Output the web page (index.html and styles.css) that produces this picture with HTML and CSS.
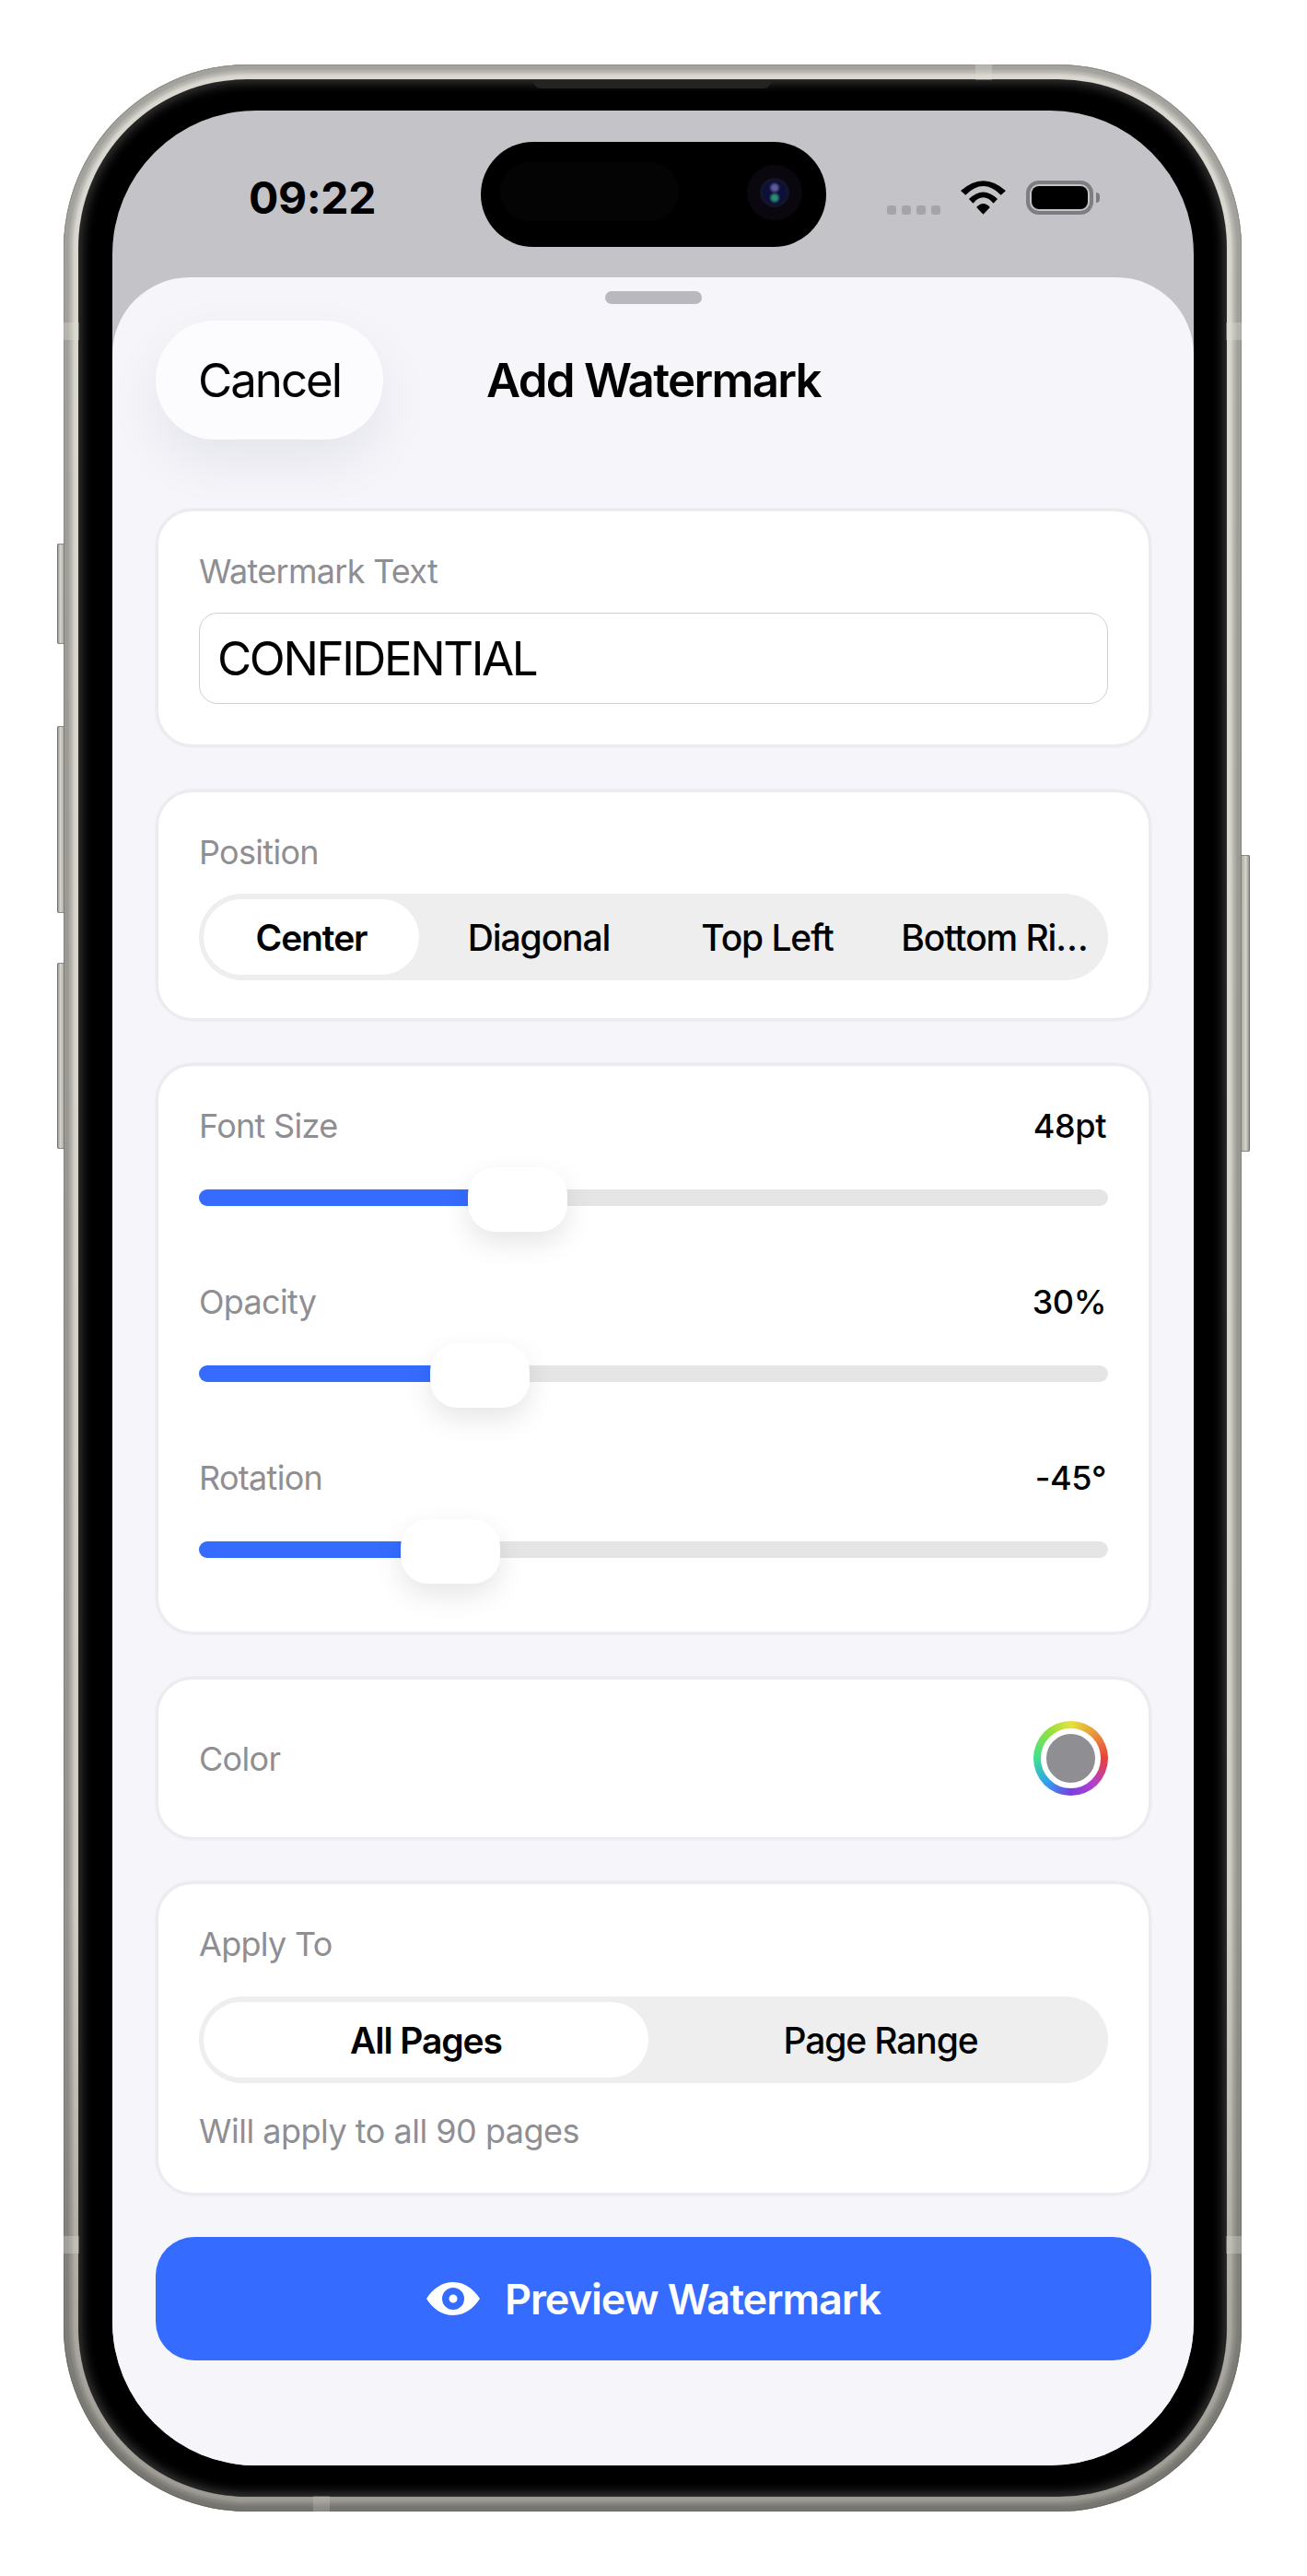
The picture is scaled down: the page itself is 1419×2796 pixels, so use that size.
FILE: index.html
```html
<!DOCTYPE html>
<html lang="en">
<head>
<meta charset="utf-8">
<title>Add Watermark</title>
<link rel="stylesheet" href="styles.css">
</head>
<body>
<div class="phone">
  <span class="side-btn side-btn--mute"></span>
  <span class="side-btn side-btn--up"></span>
  <span class="side-btn side-btn--down"></span>
  <span class="side-btn side-btn--power"></span>
  <span class="band band--top"></span>
  <span class="band band--bottom"></span>
  <span class="band band--l1"></span>
  <span class="band band--r1"></span>
  <span class="band band--l2"></span>
  <span class="band band--r2"></span>
  <div class="bezel">
    <span class="speaker"></span>
    <div class="screen">
      <div class="island">
        <span class="island-pill"></span>
        <span class="lens"><span class="lens-core"></span></span>
      </div>
      <header class="status">
        <span class="time">09:22</span>
        <div class="status-icons">
          <div class="signal"><i></i><i></i><i></i><i></i></div>
          <svg class="wifi" viewBox="0 0 49.4 37" aria-hidden="true">
            <path d="M0 11Q24.7-11 49.4 11L44.1 15.7Q24.7-3.7 5.3 15.7Z"/>
            <path d="M9 20Q24.7 4.7 40.4 20L35.8 24.7Q24.7 12 13.6 24.7Z"/>
            <path d="M17.3 29Q24.7 21 32.1 29L24.7 37Z"/>
          </svg>
          <div class="battery"><span class="battery-fill"></span></div>
          <span class="battery-cap"></span>
        </div>
      </header>
      <main class="sheet">
        <div class="grabber"></div>
        <div class="nav">
          <button class="cancel">Cancel</button>
          <h1 class="title">Add Watermark</h1>
        </div>

        <section class="card card--text">
          <div class="label">Watermark Text</div>
          <div class="input">CONFIDENTIAL</div>
        </section>

        <section class="card card--position">
          <div class="label">Position</div>
          <div class="segment segment--four">
            <div class="tab tab--on">Center</div>
            <div class="tab">Diagonal</div>
            <div class="tab">Top Left</div>
            <div class="tab tab--trim">Bottom Ri…</div>
          </div>
        </section>

        <section class="card card--sliders">
          <div class="slider-row">
            <div class="label-row"><span class="label">Font Size</span><span class="value">48pt</span></div>
            <div class="slider">
              <div class="track"><div class="fill" style="width:310px"></div></div>
              <div class="thumb" style="left:292px"></div>
            </div>
          </div>
          <div class="slider-row">
            <div class="label-row"><span class="label">Opacity</span><span class="value">30%</span></div>
            <div class="slider">
              <div class="track"><div class="fill" style="width:270px"></div></div>
              <div class="thumb" style="left:251px"></div>
            </div>
          </div>
          <div class="slider-row">
            <div class="label-row"><span class="label">Rotation</span><span class="value">-45°</span></div>
            <div class="slider">
              <div class="track"><div class="fill" style="width:240px"></div></div>
              <div class="thumb" style="left:219px"></div>
            </div>
          </div>
        </section>

        <section class="card card--color">
          <span class="label">Color</span>
          <div class="swatch"><span class="swatch-dot"></span></div>
        </section>

        <section class="card card--apply">
          <div class="label">Apply To</div>
          <div class="segment segment--two">
            <div class="tab tab--on">All Pages</div>
            <div class="tab tab--trim">Page Range</div>
          </div>
          <div class="hint">Will apply to all 90 pages</div>
        </section>

        <button class="preview">
          <svg class="eye" viewBox="0 0 58 36" aria-hidden="true">
            <path fill-rule="evenodd" d="M0 18C7 7 17 0 29 0S51 7 58 18C51 29 41 36 29 36S7 29 0 18ZM29 6a12 12 0 1 0 0 24a12 12 0 1 0 0-24ZM29 13.500a4.500 4.500 0 1 1 0 9a4.500 4.500 0 1 1 0-9Z"/>
          </svg>
          <span>Preview Watermark</span>
        </button>
      </main>
    </div>
  </div>
</div>
</body>
</html>
```
FILE: styles.css
```css
* { box-sizing: border-box; margin: 0; padding: 0; }
html, body { background: #fff; }
body {
  width: 1419px;
  height: 2796px;
  padding: 70px 0 0 69px;
  overflow: hidden;
  font-family: Inter, "Noto Sans", sans-serif;
  color: #000;
}

/* device frame */
.phone {
  position: relative;
  width: 1279px;
  height: 2656px;
  padding: 17px;
  border-radius: 200px;
  background: #d6d4cc;
  box-shadow:
    inset 0 0 0 1px #85837e,
    inset 0 0 2px 6px #9a9892,
    inset 0 0 3px 10px #afada7;
}
.phone::before {
  content: "";
  position: absolute;
  inset: 0;
  border-radius: inherit;
  background: linear-gradient(180deg, rgba(255, 255, 255, .1) 0%, rgba(60, 58, 52, 0) 40%, rgba(60, 58, 52, .05) 75%, rgba(60, 58, 52, .38) 100%);
}
.bezel {
  position: relative;
  height: 100%;
  padding: 33px 35px 33px 36px;
  border-radius: 182px;
  background: #000;
  box-shadow:
    0 0 0 1px #2f2e2c,
    inset 0 0 12px 3px #383838;
}
.speaker {
  position: absolute;
  left: 493px;
  top: 0;
  width: 258px;
  height: 9px;
  border-radius: 0 0 8px 8px;
  background: #232323;
}
.screen {
  position: relative;
  height: 100%;
  display: flex;
  flex-direction: column;
  border-radius: 156px;
  overflow: hidden;
  background: #c4c3c8;
}

.side-btn {
  position: absolute;
  width: 8px;
  background: linear-gradient(90deg, #8b8985, #d5d3cc 45%, #a9a7a1);
  box-shadow: inset 0 0 0 1px rgba(90, 88, 84, .55);
}
.side-btn--mute { left: -7px; top: 520px; height: 109px; border-radius: 2px 0 0 2px; }
.side-btn--up { left: -7px; top: 718px; height: 203px; border-radius: 2px 0 0 2px; }
.side-btn--down { left: -7px; top: 975px; height: 202px; border-radius: 2px 0 0 2px; }
.side-btn--power { right: -9px; top: 858px; height: 322px; width: 10px; border-radius: 0 2px 2px 0; background: linear-gradient(90deg, #a9a7a1, #d5d3cc 55%, #8b8985); }

.band { position: absolute; z-index: 1; background: rgba(225, 223, 216, .32); }
.band--top { left: 990px; top: 0; width: 18px; height: 17px; }
.band--bottom { left: 271px; bottom: 0; width: 18px; height: 17px; background: rgba(215, 213, 206, .25); }
.band--l1 { left: 0; top: 280px; width: 17px; height: 19px; }
.band--r1 { right: 0; top: 280px; width: 17px; height: 19px; }
.band--l2 { left: 0; top: 2357px; width: 17px; height: 19px; }
.band--r2 { right: 0; top: 2357px; width: 17px; height: 19px; }

/* status bar */
.island {
  position: absolute;
  z-index: 2;
  left: 400px;
  top: 34px;
  width: 375px;
  height: 114px;
  border-radius: 57px;
  background: #000;
}
.island-pill {
  position: absolute;
  left: 21px;
  top: 22px;
  width: 194px;
  height: 64px;
  border-radius: 32px;
  background: #040404;
}
.lens {
  position: absolute;
  left: 289px;
  top: 25px;
  width: 60px;
  height: 60px;
  border-radius: 50%;
  background: #0a070e;
  display: flex;
  align-items: center;
  justify-content: center;
}
.lens-core {
  width: 32px;
  height: 32px;
  border-radius: 50%;
  border: 4px solid #12152a;
  background: radial-gradient(circle at 50% 28%, #5d5a9a 0 12%, transparent 30%),
              radial-gradient(circle at 50% 74%, #2a8a72 0 12%, transparent 30%),
              #0c0f3a;
}
.status {
  flex: none;
  height: 181px;
  padding: 76px 102px 0 148px;
  display: flex;
  justify-content: space-between;
  align-items: flex-start;
}
.time {
  font-size: 48px;
  line-height: 38px;
  font-weight: 700;
  letter-spacing: -.4px;
}
.status-icons {
  height: 37px;
  display: flex;
  align-items: flex-end;
}
.signal { display: flex; gap: 6px; margin-right: 22px; }
.signal i { width: 10px; height: 10px; border-radius: 3px; background: #a5a5a9; }
.wifi { width: 49px; height: 37px; fill: #000; margin-right: 22px; }
.battery {
  width: 73px;
  height: 37px;
  padding: 2px;
  border: 4px solid #7d7d82;
  border-radius: 14px;
  display: flex;
}
.battery-fill { flex: 1; background: #000; border-radius: 8px; }
.battery-cap {
  width: 4px;
  height: 11px;
  margin: 0 0 13px 3px;
  border-radius: 0 4px 4px 0;
  background: #7d7d82;
}

/* sheet */
.sheet {
  flex: 1;
  display: flex;
  flex-direction: column;
  padding: 15px 46px 0 47px;
  border-radius: 84px 84px 0 0;
  background: #f5f5fa;
}
.grabber {
  flex: none;
  width: 105px;
  height: 14px;
  margin: 0 auto 18px;
  border-radius: 7px;
  background: #b8b8be;
}
.nav {
  position: relative;
  flex: none;
  height: 129px;
  margin-bottom: 75px;
  display: flex;
  align-items: center;
}
.cancel {
  width: 247px;
  height: 129px;
  border: 0;
  border-radius: 64px;
  background: #fcfcfe;
  box-shadow: 0 24px 60px rgba(20, 20, 50, .07);
  font: 400 51px Inter, sans-serif;
  letter-spacing: -2px;
  color: #000;
}
.title {
  position: absolute;
  left: 0;
  right: 0;
  text-align: center;
  font-size: 51px;
  line-height: 60px;
  font-weight: 600;
  letter-spacing: -1.7px;
}

/* cards */
.card {
  flex: none;
  margin-bottom: 46px;
  padding: 44px;
  border: 3px solid #ececf0;
  border-radius: 40px;
  background: #fff;
  box-shadow: 0 0 0 1px #f0f0f4;
}
.card--position { padding-bottom: 41px; }
.card--sliders { padding-bottom: 54px; display: flex; flex-direction: column; gap: 57px; }
.card--color { display: flex; align-items: center; justify-content: space-between; padding: 45px 44px; margin-bottom: 45px; }
.card--apply { padding-bottom: 46px; margin-bottom: 45px; }
.label {
  display: block;
  height: 42px;
  font-size: 36px;
  line-height: 42px;
  letter-spacing: -.7px;
  color: #8e8e93;
}
.input {
  height: 99px;
  margin-top: 24px;
  padding-left: 19px;
  border: 1px solid #cfcfd4;
  border-radius: 20px;
  font-size: 51px;
  line-height: 97px;
  letter-spacing: -2.4px;
}
.segment {
  display: grid;
  height: 94px;
  margin-top: 24px;
  padding: 6px 5px;
  border-radius: 47px;
  background: #eeeeef;
}
.segment--four { grid-template-columns: 234px 260px 236px 1fr; }
.segment--two { grid-template-columns: 483px 1fr; margin-top: 36px; }
.tab {
  display: flex;
  align-items: center;
  justify-content: center;
  font-size: 39px;
  font-weight: 500;
  letter-spacing: -1.1px;
  white-space: nowrap;
}
.tab--on { background: #fff; border-radius: 41px; font-weight: 600; }
.tab--trim { padding-left: 10px; }
.hint {
  height: 42px;
  margin-top: 31px;
  font-size: 36px;
  line-height: 42px;
  letter-spacing: -.5px;
  color: #8e8e93;
}

/* sliders */
.label-row { display: flex; justify-content: space-between; align-items: center; height: 42px; }
.value { padding-right: 2px; font-size: 36px; line-height: 42px; font-weight: 500; letter-spacing: -.4px; }
.slider {
  position: relative;
  height: 70px;
  margin-top: 22px;
  display: flex;
  align-items: center;
}
.track { flex: 1; height: 18px; border-radius: 9px; background: #e5e5e5; overflow: hidden; }
.fill { height: 100%; background: #356cff; }
.thumb {
  position: absolute;
  top: 2px;
  width: 108px;
  height: 70px;
  border-radius: 30px;
  background: #fff;
  box-shadow: 0 12px 30px rgba(0, 0, 0, .1);
}

/* color swatch */
.swatch {
  width: 81px;
  height: 81px;
  padding: 8px;
  border-radius: 50%;
  background: conic-gradient(#e6e23c 0deg, #e88a3c 50deg, #e8403a 90deg, #b040d0 140deg, #7a3fe0 180deg, #30a0f0 225deg, #40e090 270deg, #90e040 320deg, #e6e23c 360deg);
}
.swatch-dot {
  display: block;
  width: 100%;
  height: 100%;
  border: 6px solid #fff;
  border-radius: 50%;
  background: #8e8e93;
}

/* primary button */
.preview {
  flex: none;
  height: 134px;
  border: 0;
  border-radius: 42px;
  background: #356cff;
  color: #fff;
  font: 600 45px Inter, sans-serif;
  letter-spacing: -1px;
  display: flex;
  align-items: center;
  justify-content: center;
  gap: 27px;
}
.eye { width: 58px; height: 36px; fill: #fff; }
```
